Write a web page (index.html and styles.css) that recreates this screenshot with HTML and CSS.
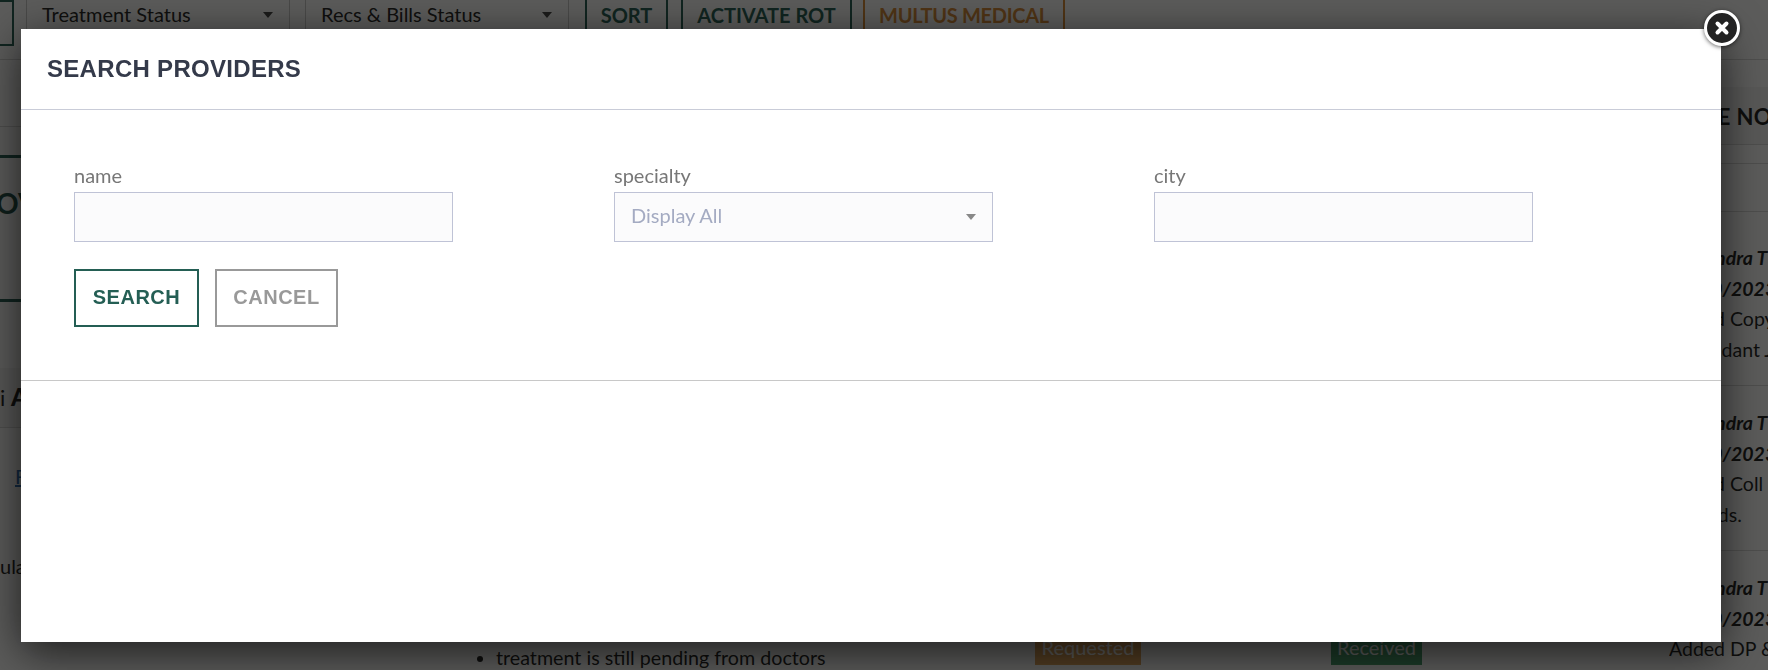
FILE: index.html
```html
<!DOCTYPE html>
<html lang="en">
<head>
<meta charset="utf-8">
<title>Search Providers</title>
<link rel="stylesheet" href="styles.css">
</head>
<body>
<div class="page">
  <div class="toolbar">
    <div class="tool-box"></div>
    <div class="tool-select">Treatment Status<svg class="caret-dark" viewBox="0 0 10 6"><path d="M0 0h10L5 6z"/></svg></div>
    <div class="tool-select">Recs &amp; Bills Status<svg class="caret-dark" viewBox="0 0 10 6"><path d="M0 0h10L5 6z"/></svg></div>
    <div class="tool-btn sort">SORT</div>
    <div class="tool-btn rot">ACTIVATE ROT</div>
    <div class="tool-btn multus">MULTUS MEDICAL</div>
  </div>
  <div class="columns">
    <div class="left">
      <div class="strip"></div>
      <div class="overview"><span class="overview-text">OV</span></div>
      <div class="band">i <b>A</b></div>
      <div class="link-row"><a class="fake-link">F</a></div>
      <div class="plain-row">ular</div>
      <div class="bottom-row">
        <ul class="pending"><li>treatment is still pending from doctors</li></ul>
        <span class="badge requested">Requested</span>
        <span class="badge received">Received</span>
      </div>
    </div>
    <div class="right">
      <div class="notes-head">CASE NOTES</div>
      <div class="notes-gap"></div>
      <div class="note first">
        <div class="who">Alexandra T</div>
        <div class="who">10/10/2023</div>
        <div>Added Copy</div>
        <div>Defendant J</div>
      </div>
      <div class="note">
        <div class="who">Alexandra T</div>
        <div class="who">10/10/2023</div>
        <div>Added Coll</div>
        <div>Records.</div>
      </div>
      <div class="note">
        <div class="who">Alexandra T</div>
        <div class="who">10/10/2023</div>
        <div>Added DP &amp;</div>
      </div>
    </div>
  </div>
</div>

<div class="scrim">
  <div class="modal">
    <button class="close" aria-label="Close">
      <svg viewBox="0 0 16 16"><path d="M3.5 3.5l9 9M12.5 3.5l-9 9"/></svg>
    </button>
    <h2 class="modal-title">SEARCH PROVIDERS</h2>
    <form class="search">
      <div class="fields">
        <label class="field"><span class="field-label">name</span><input class="control" type="text"></label>
        <label class="field"><span class="field-label">specialty</span>
          <span class="select-wrap">
            <select class="control select"><option>Display All</option></select>
            <svg class="caret" viewBox="0 0 10 6"><path d="M0 0h10L5 6z"/></svg>
          </span>
        </label>
        <label class="field"><span class="field-label">city</span><input class="control" type="text"></label>
      </div>
      <div class="actions">
        <button type="button" class="btn primary">SEARCH</button>
        <button type="button" class="btn muted">CANCEL</button>
      </div>
    </form>
    <div class="results"></div>
  </div>
</div>
</body>
</html>
```
FILE: styles.css
```css
* { box-sizing: border-box; }
html, body { margin: 0; height: 670px; overflow: hidden; }
body { font-family: Lato, "Noto Sans", sans-serif; color: #1d1d1d; background: #fff; }

.page { height: 670px; overflow: hidden; font-size: 20px; }

.toolbar { display: flex; height: 60px; border-bottom: 1px solid #d8d8d8; }
.tool-box { width: 14px; height: 46px; margin-right: 12px; border: 2px solid #245e54; border-left: 0; }
.tool-select { position: relative; display: flex; align-items: center; width: 264px; height: 50px; margin: -10px 15px 0 0; padding: 0 16px 2px 15px; border: 1px solid #c9c9c9; font-size: 20px; line-height: 46px; color: #222; }
.caret-dark { position: absolute; top: 21px; right: 16px; width: 10px; height: 6px; fill: #444; }
.tool-btn { height: 50px; margin: -10px 11px 0 0; border: 2px solid #245e54; font-weight: 700; font-size: 20px; line-height: 46px; color: #245e54; text-align: center; }
.sort { width: 83px; margin-left: 1px; margin-right: 13px; }
.rot { width: 171px; }
.multus { width: 202px; border-color: #d98a35; color: #d98a35; letter-spacing: -.3px; }

.columns { display: grid; grid-template-columns: 1669px 99px; }
.left { min-width: 0; }
.strip { height: 67px; border-bottom: 1px solid #d8d8d8; margin-bottom: 28px; }
.overview { height: 147px; border-top: 3px solid #245e54; border-bottom: 3px solid #245e54; padding-top: 25px; overflow: hidden; }
.overview-text { display: block; margin-left: -4px; font-size: 28px; font-weight: 700; line-height: 40px; color: #1f4f47; }
.band { height: 60px; margin-top: 66px; border-bottom: 1px solid #d8d8d8; background: #f4f4f4; font-size: 22px; line-height: 58px; }
.band b { font-weight: 900; font-size: 24px; }
.link-row { height: 90px; padding: 36px 0 0 15px; line-height: 24px; }
.fake-link { color: #2a6db5; text-decoration: underline; }
.plain-row { height: 125px; padding-top: 36px; line-height: 24px; }
.bottom-row { display: flex; height: 60px; }
.pending { width: 1035px; margin: 0; padding: 3px 0 0 496px; font-size: 19.7px; line-height: 24px; white-space: nowrap; }
.badge { width: 106px; height: 34px; margin-top: -12px; background: #e2a358; color: #fff; font-size: 20px; line-height: 32px; text-align: center; }
.received { width: 91px; margin-left: 190px; background: #45a06c; }

.right { min-width: 0; white-space: nowrap; font-size: 19.5px; line-height: 30.5px; overflow: hidden; }
.notes-head { height: 58px; margin-top: 27px; padding: 13px 0 0 6px; background: #f4f4f4; border-bottom: 1px solid #d8d8d8; font-size: 22px; font-weight: 700; line-height: 34px; letter-spacing: .3px; }
.notes-gap { height: 67px; border-bottom: 1px solid #d8d8d8; }
.notes-gap::before { content: ""; display: block; height: 18px; border-bottom: 1px solid #d8d8d8; }
.note { height: 165px; padding-top: 22px; border-bottom: 1px solid #d8d8d8; }
.note.first { height: 174px; padding-top: 31px; }
.who { font-style: italic; font-weight: 700; }

.scrim { position: fixed; inset: 0; padding: 29px 47px 28px 21px; background: rgba(8, 8, 6, .66); }
.modal { position: relative; height: 100%; background: #fff; box-shadow: 0 10px 42px rgba(0, 0, 0, .7); }
.close { position: absolute; top: -19px; right: -19px; display: flex; align-items: center; justify-content: center; width: 36px; height: 36px; padding: 0; border: 3px solid #fff; border-radius: 50%; background: #232323; box-shadow: 0 1px 4px rgba(0, 0, 0, .6); }
.close svg { width: 16px; height: 16px; fill: none; stroke: #fff; stroke-width: 4; stroke-linecap: round; }
.modal-title { height: 81px; margin: 0; padding: 26px 0 0 26px; border-bottom: 1px solid #c9ccd8; font-family: "Liberation Sans", Arial, sans-serif; font-size: 24px; font-weight: 700; line-height: 28px; letter-spacing: .3px; color: #343a4a; }
.search { height: 271px; padding: 53px 0 0 53px; border-bottom: 1px solid #c8c8c8; }
.fields { display: grid; grid-template-columns: repeat(3, 540px); }
.field { display: flex; flex-direction: column; width: 379px; }
.field-label { height: 29px; font-size: 20px; line-height: 24px; color: #777; }
.control { display: block; width: 100%; height: 50px; padding: 0 16px 5px; border: 1px solid #bfc3d6; border-radius: 0; background: #fbfbfc; font-family: inherit; font-size: 20px; color: #a4abc2; outline: 0; }
.select-wrap { position: relative; display: block; }
.select { appearance: none; -webkit-appearance: none; }
.caret { position: absolute; top: 22px; right: 17px; width: 10px; height: 6px; fill: #888; }
.actions { display: flex; gap: 16px; margin-top: 27px; }
.btn { height: 58px; padding: 0 0 1px; border: 2px solid; background: #fff; font-family: "Liberation Sans", Arial, sans-serif; font-size: 20px; font-weight: 700; letter-spacing: .5px; }
.primary { width: 125px; border-color: #245e54; color: #245e54; }
.muted { width: 123px; border-color: #999; color: #999; }
```
